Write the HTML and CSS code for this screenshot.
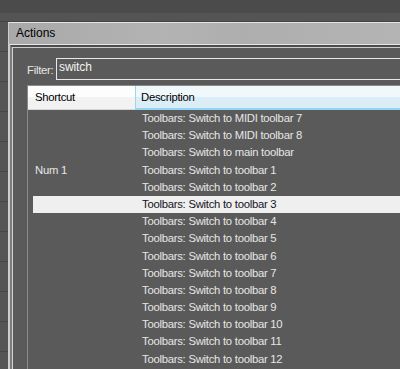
FILE: index.html
```html
<!doctype html>
<html>
<head>
<meta charset="utf-8">
<title>Actions</title>
<link rel="stylesheet" href="styles.css">
</head>
<body>
	<div class="topbar"></div>
	<div class="topband"></div>
	<div class="main">
		<div class="side"></div>
		<div class="dialog">
			<div class="title">Actions</div>
			<div class="frame">
				<div class="frame2">
					<div class="content">
						<div class="filter">
							<label>Filter:</label>
							<div class="input">switch</div>
						</div>
						<div class="list">
							<div class="head">
								<div class="hkey">Shortcut</div>
								<div class="hdesc">Description</div>
							</div>
							<div class="row"><span class="key"></span><span class="desc">Toolbars: Switch to MIDI toolbar 7</span></div>
							<div class="row"><span class="key"></span><span class="desc">Toolbars: Switch to MIDI toolbar 8</span></div>
							<div class="row"><span class="key"></span><span class="desc">Toolbars: Switch to main toolbar</span></div>
							<div class="row"><span class="key">Num 1</span><span class="desc">Toolbars: Switch to toolbar 1</span></div>
							<div class="row"><span class="key"></span><span class="desc">Toolbars: Switch to toolbar 2</span></div>
							<div class="row sel"><span class="key"></span><span class="desc">Toolbars: Switch to toolbar 3</span></div>
							<div class="row"><span class="key"></span><span class="desc">Toolbars: Switch to toolbar 4</span></div>
							<div class="row"><span class="key"></span><span class="desc">Toolbars: Switch to toolbar 5</span></div>
							<div class="row"><span class="key"></span><span class="desc">Toolbars: Switch to toolbar 6</span></div>
							<div class="row"><span class="key"></span><span class="desc">Toolbars: Switch to toolbar 7</span></div>
							<div class="row"><span class="key"></span><span class="desc">Toolbars: Switch to toolbar 8</span></div>
							<div class="row"><span class="key"></span><span class="desc">Toolbars: Switch to toolbar 9</span></div>
							<div class="row"><span class="key"></span><span class="desc">Toolbars: Switch to toolbar 10</span></div>
							<div class="row"><span class="key"></span><span class="desc">Toolbars: Switch to toolbar 11</span></div>
							<div class="row"><span class="key"></span><span class="desc">Toolbars: Switch to toolbar 12</span></div>
						</div>
					</div>
				</div>
			</div>
		</div>
	</div>
</body>
</html>
```

FILE: styles.css
```css
html,body{ margin:0; padding:0;}
body{ background:#4f4f4f; width:400px; height:369px; overflow:hidden; font-family:"Liberation Sans",Arial,sans-serif; font-size:11.3px; letter-spacing:-0.26px;}
.topbar{ height:13px; background:#4b4b4b;}
.topband{ height:8px; background:#545454; border-bottom:1px solid #444;}
.main{ display:flex; height:347px;}
.side{ width:8px; background:#555 repeating-linear-gradient(to bottom,#555 0,#555 29px,#474747 29px,#474747 30px);}
.dialog{ flex:1; border-top:1px solid #e4e4e4; border-left:1px solid #cfcfcf; display:flex; flex-direction:column;}
.title{ height:21px; line-height:21px; padding-left:7px; font-size:12px; letter-spacing:0; color:#000; background:linear-gradient(to right,#a9a9a9,#b3b3b3 40%,#aeaeae 60%,#b4b4b4);}
.frame{ flex:1; border-top:1px solid #e6e6e6; border-left:1px solid #c9c9c9; display:flex;}
.frame2{ flex:1; border-top:2px solid #4c4c4c; border-left:2px solid #7d7d7d; display:flex;}
.content{ flex:1; border-top:1px solid #cdcdcd; border-left:1px solid #d2d2d2; background:#5a5a5a; padding:10px 0 0 14px; display:flex; flex-direction:column;}
.filter{ display:flex; align-items:center; height:22px;}
.filter label{ color:#e6e6e6; width:29px; padding-top:1px;}
.input{ flex:1; height:20px; line-height:17px; border:1px solid #e8e8e8; border-right:none; padding-left:2px; color:#f4f4f4; font-size:12px; letter-spacing:-0.1px;}
.list{ margin-top:5px; flex:1; border-top:1px solid #8a8a8a; border-left:1px solid #8a8a8a;}
.head{ display:flex; height:24px;}
.hkey{ width:100px; padding-left:7px; line-height:22px; color:#000; background:linear-gradient(to bottom,#fdfdfd,#fdfdfd 50%,#f2f2f2 50%,#f2f2f2); border-bottom:1px solid #d5d5d5;}
.hdesc{ flex:1; padding-left:5px; line-height:22px; color:#000; border-left:1px solid #9fd4ee; background:linear-gradient(to bottom,#f1f8fc,#f1f8fc 48%,#dbeef7 48%,#dbeef7); border-bottom:2px solid #93d4f4;}
.row{ display:flex; height:17.2px; line-height:17px; margin-left:5px; color:#e6e6e6;}
.row .key{ width:100px; padding-left:2px;}
.row .desc{ padding-left:7px;}
.row.sel{ background:#efefef; color:#14141e;}
```
